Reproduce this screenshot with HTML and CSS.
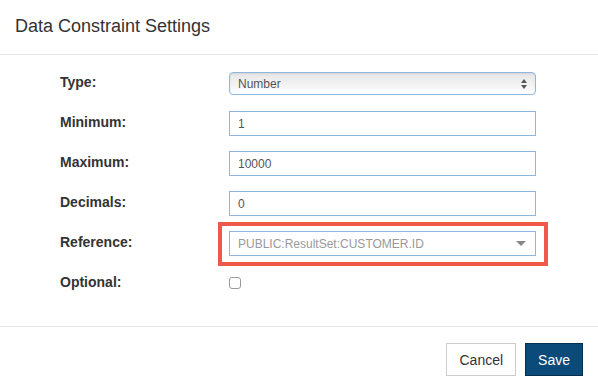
FILE: index.html
```html
<!DOCTYPE html>
<html lang="en">
<head>
  <meta charset="UTF-8">
  <meta name="viewport" content="width=device-width, initial-scale=1.0">
  <title>Data Constraint Settings</title>
  <link rel="stylesheet" href="styles.css">
</head>
<body>
  <div class="modal">
    <header class="modal-header">
      <h1>Data Constraint Settings</h1>
    </header>
    <div class="modal-body">
      <div class="row">
        <label>Type:</label>
        <div class="select native">
          <span>Number</span>
          <svg width="6" height="10" viewBox="0 0 6 10"><path d="M3 0 L6 4 L0 4 Z M0 6 L6 6 L3 10 Z" fill="#555"/></svg>
        </div>
      </div>
      <div class="row">
        <label>Minimum:</label>
        <div class="input">1</div>
      </div>
      <div class="row">
        <label>Maximum:</label>
        <div class="input">10000</div>
      </div>
      <div class="row">
        <label>Decimals:</label>
        <div class="input">0</div>
      </div>
      <div class="row">
        <label>Reference:</label>
        <div class="highlight">
          <div class="input combo">
            <span>PUBLIC:ResultSet:CUSTOMER.ID</span>
            <svg width="10" height="6" viewBox="0 0 10 6"><path d="M0 0 L10 0 L5 5 Z" fill="#888"/></svg>
          </div>
        </div>
      </div>
      <div class="row">
        <label>Optional:</label>
        <span class="checkbox"></span>
      </div>
    </div>
    <footer class="modal-footer">
      <button class="btn">Cancel</button>
      <button class="btn btn-primary">Save</button>
    </footer>
  </div>
</body>
</html>
```

FILE: styles.css
```css
:root {
  --border: #e5e5e5;
  --field-border: #8fb6e0;
  --text-main: #333333;
  --text-field: #555555;
  --primary: #0b4b79;
  --primary-border: #062f4d;
  --mark: #f2584a;
}
*, *::before, *::after { box-sizing: border-box; }
body {
  margin: 0;
  background: #ffffff;
  font-family: "Liberation Sans", Arial, sans-serif;
  color: var(--text-main);
}
.modal { width: 598px; }
.modal-header {
  height: 55px;
  padding: 15px 15px 0;
  border-bottom: 1px solid var(--border);
}
.modal-header h1 {
  margin: 0;
  font-size: 18px;
  font-weight: normal;
  line-height: 22px;
}
.modal-body {
  padding: 16px 0 30px 60px;
  display: flex;
  flex-direction: column;
  gap: 15px;
}
.row {
  display: flex;
  align-items: center;
  height: 25px;
}
.row label {
  width: 169px;
  font-size: 14px;
  font-weight: bold;
  color: #333;
  margin-top: -3px;
}
.input, .select {
  width: 307px;
  height: 25px;
  border: 1px solid var(--field-border);
  padding: 0 8px;
  font-size: 12px;
  color: var(--text-field);
  display: flex;
  align-items: center;
  justify-content: space-between;
  background: #fff;
}
.select.native {
  height: 23px;
  border-radius: 4px;
  background: linear-gradient(#e6e6e6, #f4f4f4 60%, #ffffff);
  box-shadow: inset 0 1px 2px rgba(0,0,0,0.08);
}
.combo { color: #999; padding-right: 9px; }
.highlight { position: relative; }
.highlight::before {
  content: "";
  position: absolute;
  top: -9px; bottom: -10px; left: -11px; right: -12px;
  border: 4px solid var(--mark);
  pointer-events: none;
}
.checkbox {
  width: 12px;
  height: 12px;
  border: 1px solid #999;
  border-radius: 3px;
  margin-top: -2px;
}
.modal-footer {
  border-top: 1px solid var(--border);
  padding: 16px 15px 0;
  display: flex;
  justify-content: flex-end;
  gap: 9px;
}
.btn {
  height: 33px;
  padding: 0 12px;
  font-family: inherit;
  font-size: 14px;
  color: #333;
  background: #fff;
  border: 1px solid #cccccc;
  border-radius: 0;
}
.btn-primary {
  background: var(--primary);
  border-color: var(--primary-border);
  color: #fff;
}
```
